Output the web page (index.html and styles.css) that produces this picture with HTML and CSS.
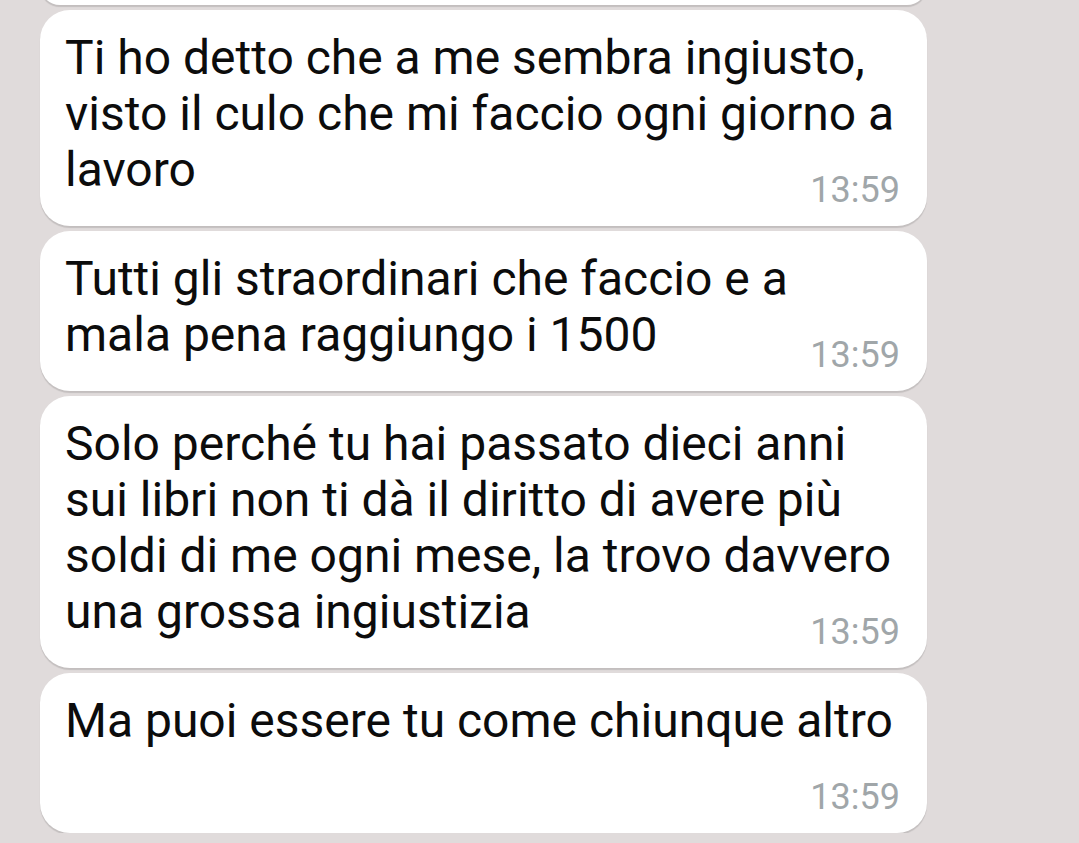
FILE: index.html
```html
<!DOCTYPE html>
<html lang="it">
<head>
    <meta charset="UTF-8">
    <meta name="viewport" content="width=device-width, initial-scale=1.0">
    <title>Chat</title>
    <link rel="stylesheet" href="styles.css">
</head>
<body>
    <div class="chat">
        <div class="bubble cut"></div>
        <div class="bubble">
            <p class="text">Ti ho detto che a me sembra ingiusto, visto il culo che mi faccio ogni giorno a lavoro<span class="time">13:59</span></p>
        </div>
        <div class="bubble">
            <p class="text">Tutti gli straordinari che faccio e a mala pena raggiungo i 1500<span class="time">13:59</span></p>
        </div>
        <div class="bubble">
            <p class="text">Solo perché tu hai passato dieci anni sui libri non ti dà il diritto di avere più soldi di me ogni mese, la trovo davvero una grossa ingiustizia<span class="time">13:59</span></p>
        </div>
        <div class="bubble">
            <p class="text">Ma puoi essere tu come chiunque altro<span class="time">13:59</span></p>
        </div>
    </div>
</body>
</html>
```

FILE: styles.css
```css
* {
    margin: 0;
    padding: 0;
    box-sizing: border-box;
}

body {
    background-color: #e0dbdb;
    font-family: Roboto, "Noto Sans", sans-serif;
    overflow: hidden;
}

.chat {
    width: 887px;
    margin-left: 40px;
    margin-top: -35px;
    display: flex;
    flex-direction: column;
    gap: 5px;
}

.bubble {
    background-color: #fff;
    border-radius: 30px;
    padding: 20px 27px 16px 25px;
    box-shadow: 0 2px 1px rgba(0, 0, 0, 0.13);
}

.bubble.cut {
    height: 40px;
    flex-shrink: 0;
}

.text {
    display: flow-root;
    font-size: 48px;
    line-height: 56px;
    color: #0c0c0c;
}

.time {
    float: right;
    margin: 28px 0 0 24px;
    font-size: 36px;
    line-height: 40px;
    color: #a0a6a9;
}
```
